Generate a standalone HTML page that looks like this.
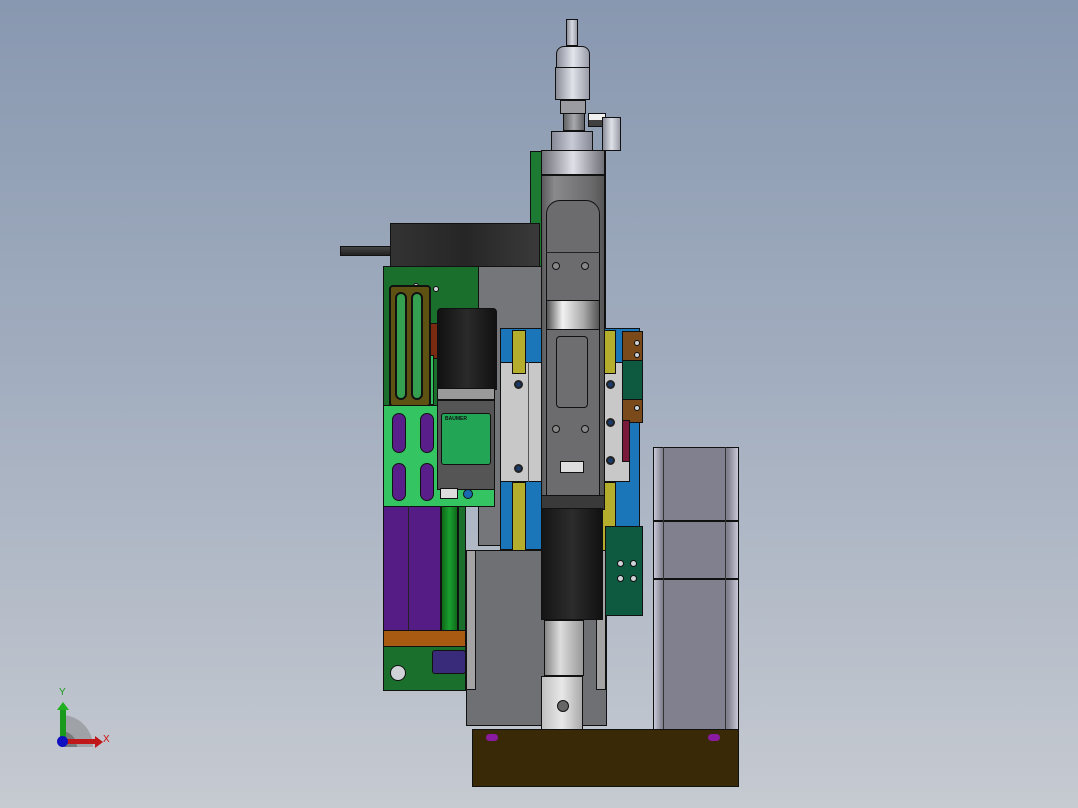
<!DOCTYPE html>
<html><head><style>
*{margin:0;padding:0;box-sizing:border-box}
body{width:1078px;height:808px;overflow:hidden;background:linear-gradient(180deg,#8898b0 0%,#a4afc0 50%,#c6cad1 100%);position:relative;font-family:"Liberation Sans",sans-serif}
div{position:absolute}
.b{border:1px solid #111}
.h{border-radius:50%;background:#cfd3d8;border:1px solid #111}
.s{border-radius:50%;background:#1a3a6a;border:2px solid #222;width:9px;height:9px}
</style></head><body>
<!-- top spindle -->
<div class="b" style="left:566px;top:19px;width:12px;height:27px;background:linear-gradient(90deg,#8a8c98,#d8dae2,#9a9ca8)"></div>
<div class="b" style="left:556px;top:46px;width:34px;height:22px;background:linear-gradient(90deg,#8a8c98,#e4e6ee,#9a9ca8);border-radius:8px 8px 0 0"></div>
<div class="b" style="left:555px;top:67px;width:35px;height:33px;background:linear-gradient(90deg,#8a8c98,#e0e2ea,#9a9ca8)"></div>
<div class="b" style="left:560px;top:100px;width:26px;height:14px;background:#9a9ca2"></div>
<div class="b" style="left:563px;top:113px;width:22px;height:18px;background:linear-gradient(90deg,#606264,#a8aaae,#606264)"></div>
<div class="b" style="left:551px;top:131px;width:42px;height:22px;background:linear-gradient(90deg,#888a98,#c8cad6,#888a98)"></div>
<div class="b" style="left:588px;top:113px;width:18px;height:14px;background:linear-gradient(180deg,#f0f0f0 50%,#404040 50%)"></div>
<div class="b" style="left:602px;top:117px;width:19px;height:34px;background:linear-gradient(90deg,#8a8c98,#e0e2ea,#9a9ca8)"></div>
<!-- green back plate -->
<div class="b" style="left:530px;top:151px;width:76px;height:300px;background:#1c7a32"></div>
<!-- cylinder top black -->
<div class="b" style="left:340px;top:246px;width:52px;height:10px;background:linear-gradient(180deg,#444,#222)"></div>
<div class="b" style="left:390px;top:223px;width:150px;height:46px;background:linear-gradient(90deg,#333,#262626,#3a3a3a)"></div>
<!-- grey block behind -->
<div class="b" style="left:478px;top:266px;width:64px;height:280px;background:#75767a"></div>
<!-- left green plate -->
<div class="b" style="left:383px;top:266px;width:96px;height:140px;background:#1b6f2c"></div>
<div class="h" style="left:413px;top:283px;width:6px;height:6px"></div>
<div class="h" style="left:433px;top:286px;width:6px;height:6px"></div>
<div class="b" style="left:389px;top:323px;width:50px;height:36px;background:#7a2a10"></div>
<div class="b" style="left:389px;top:355px;width:45px;height:50px;background:#34c060"></div>
<div style="left:389px;top:285px;width:42px;height:122px;border:2px solid #111;background:#5e5212;border-radius:4px"></div>
<div style="left:395px;top:292px;width:12px;height:108px;border:2px solid #111;background:#34a050;border-radius:6px"></div>
<div style="left:411px;top:292px;width:12px;height:108px;border:2px solid #111;background:#34a050;border-radius:6px"></div>
<!-- blue plate -->
<div class="b" style="left:500px;top:328px;width:140px;height:222px;background:#1a76b8"></div>
<div class="b" style="left:500px;top:362px;width:130px;height:120px;background:#c8c8c8"></div>
<div style="left:528px;top:362px;width:1px;height:120px;background:#555"></div>
<div class="s" style="left:514px;top:380px"></div><div class="s" style="left:514px;top:464px"></div>
<div class="s" style="left:606px;top:380px"></div><div class="s" style="left:606px;top:418px"></div><div class="s" style="left:606px;top:456px"></div>
<div class="b" style="left:512px;top:330px;width:14px;height:44px;background:#b5ad2c"></div>
<div class="b" style="left:512px;top:482px;width:14px;height:70px;background:#b5ad2c"></div>
<div class="b" style="left:602px;top:330px;width:14px;height:44px;background:#b5ad2c"></div>
<div class="b" style="left:602px;top:482px;width:14px;height:70px;background:#b5ad2c"></div>
<!-- right brackets -->
<div class="b" style="left:622px;top:331px;width:21px;height:92px;background:#7a4a1a"></div>
<div class="b" style="left:622px;top:360px;width:21px;height:40px;background:#0e5a40"></div>
<div class="h" style="left:634px;top:340px;width:6px;height:6px"></div>
<div class="h" style="left:634px;top:352px;width:6px;height:6px"></div>
<div class="h" style="left:634px;top:405px;width:6px;height:6px"></div>
<div class="b" style="left:622px;top:420px;width:8px;height:42px;background:#7a1a3a"></div>
<!-- black motor -->
<div class="b" style="left:437px;top:308px;width:60px;height:82px;background:linear-gradient(90deg,#111,#2a2a2a,#111);border-radius:4px 4px 0 0"></div>
<div class="b" style="left:437px;top:388px;width:58px;height:12px;background:#9a9a9a"></div>
<!-- light green plate -->
<div class="b" style="left:383px;top:405px;width:112px;height:102px;background:#34c462"></div>
<div class="b" style="left:437px;top:400px;width:58px;height:90px;background:#555"></div>
<div class="b" style="left:441px;top:413px;width:50px;height:52px;background:#22a656;border-radius:3px"></div>
<div style="left:445px;top:416px;font-size:5px;font-weight:bold;color:#111">BAUMER</div>
<div class="b" style="left:392px;top:413px;width:14px;height:40px;background:#5a1e8a;border-radius:7px"></div>
<div class="b" style="left:420px;top:413px;width:14px;height:40px;background:#5a1e8a;border-radius:7px"></div>
<div class="b" style="left:392px;top:463px;width:14px;height:38px;background:#5a1e8a;border-radius:7px"></div>
<div class="b" style="left:420px;top:463px;width:14px;height:38px;background:#5a1e8a;border-radius:7px"></div>
<div class="b" style="left:440px;top:488px;width:18px;height:11px;background:#ddd"></div>
<div class="h" style="left:463px;top:489px;width:10px;height:10px;background:#1a6ab0"></div>
<!-- purple columns -->
<div class="b" style="left:383px;top:506px;width:58px;height:126px;background:#561c86"></div>
<div style="left:408px;top:506px;width:1px;height:126px;background:#222"></div>
<div class="b" style="left:441px;top:506px;width:17px;height:126px;background:linear-gradient(90deg,#0e6a18,#1aa030,#0e6a18)"></div>
<div class="b" style="left:458px;top:506px;width:8px;height:126px;background:#1b6f2c"></div>
<div class="b" style="left:383px;top:630px;width:83px;height:18px;background:#a85a12"></div>
<div class="b" style="left:383px;top:646px;width:83px;height:45px;background:#1b6f2c"></div>
<div class="h" style="left:390px;top:665px;width:16px;height:16px"></div>
<div class="b" style="left:432px;top:650px;width:34px;height:24px;background:#3a2a7a;border-radius:3px"></div>
<!-- center grey housing -->
<div class="b" style="left:466px;top:550px;width:141px;height:176px;background:#6f7073"></div>
<div class="b" style="left:466px;top:550px;width:10px;height:140px;background:#a4a4a4"></div>
<div class="b" style="left:596px;top:550px;width:10px;height:140px;background:#a4a4a4"></div>
<!-- right dark green block -->
<div class="b" style="left:605px;top:526px;width:38px;height:90px;background:#0e5a40"></div>
<div class="h" style="left:617px;top:560px;width:7px;height:7px"></div>
<div class="h" style="left:630px;top:560px;width:7px;height:7px"></div>
<div class="h" style="left:617px;top:575px;width:7px;height:7px"></div>
<div class="h" style="left:630px;top:575px;width:7px;height:7px"></div>
<!-- main tool body -->
<div class="b" style="left:541px;top:150px;width:64px;height:25px;background:linear-gradient(90deg,#707078,#e0e0e8,#707078)"></div>
<div class="b" style="left:541px;top:175px;width:64px;height:335px;background:linear-gradient(90deg,#5a5a5c,#8a8a8c 20%,#6a6a6c 80%,#555)"></div>
<div class="b" style="left:546px;top:200px;width:54px;height:300px;background:#6c6c6e;border-radius:14px 14px 0 0"></div>
<div style="left:546px;top:252px;width:54px;height:1px;background:#222"></div>
<div class="b" style="left:546px;top:300px;width:54px;height:30px;background:linear-gradient(90deg,#555,#f2f2f2 30%,#aaa 70%,#555)"></div>
<div class="b" style="left:556px;top:336px;width:32px;height:72px;background:#6e6e70;border-radius:4px"></div>
<div class="h" style="left:552px;top:262px;width:8px;height:8px;background:#888"></div>
<div class="h" style="left:581px;top:262px;width:8px;height:8px;background:#888"></div>
<div class="h" style="left:552px;top:425px;width:8px;height:8px;background:#888"></div>
<div class="h" style="left:581px;top:425px;width:8px;height:8px;background:#888"></div>
<div class="b" style="left:560px;top:461px;width:24px;height:12px;background:#ddd"></div>
<div class="b" style="left:541px;top:495px;width:64px;height:15px;background:#3a3a3a"></div>
<div class="b" style="left:541px;top:508px;width:62px;height:112px;background:linear-gradient(90deg,#151515,#2c2c2c 50%,#111)"></div>
<div class="b" style="left:544px;top:620px;width:40px;height:56px;background:linear-gradient(90deg,#888,#ddd 40%,#999)"></div>
<div class="b" style="left:541px;top:676px;width:42px;height:56px;background:linear-gradient(90deg,#c0c0c0,#e8e8e8,#aaa)"></div>
<div class="h" style="left:557px;top:700px;width:12px;height:12px;background:#666"></div>
<!-- stepper motor -->
<div class="b" style="left:653px;top:447px;width:86px;height:283px;background:linear-gradient(90deg,#c8c8d8,#80808e 10%,#80808e 88%,#c8c8d8)"></div>
<div style="left:653px;top:520px;width:86px;height:2px;background:#111"></div>
<div style="left:653px;top:578px;width:86px;height:2px;background:#111"></div>
<div style="left:663px;top:447px;width:1px;height:283px;background:#333"></div>
<div style="left:725px;top:447px;width:1px;height:283px;background:#333"></div>
<!-- base -->
<div class="b" style="left:472px;top:729px;width:267px;height:58px;background:#3a2906"></div>
<div style="left:486px;top:734px;width:12px;height:7px;background:#8a1aa0;border-radius:4px"></div>
<div style="left:708px;top:734px;width:12px;height:7px;background:#8a1aa0;border-radius:4px"></div>
<!-- axis -->
<div style="left:61px;top:715px;width:32px;height:32px;border-radius:0 32px 0 0;background:rgba(120,120,120,.45)"></div>
<div style="left:61px;top:731px;width:16px;height:16px;border-radius:0 16px 0 0;background:rgba(80,80,80,.5)"></div>
<div style="left:60px;top:708px;width:6px;height:33px;background:#1a9a1a"></div>
<div style="left:57px;top:702px;width:0;height:0;border-left:6px solid transparent;border-right:6px solid transparent;border-bottom:8px solid #20b020"></div>
<div style="left:64px;top:739px;width:32px;height:5px;background:#c01818"></div>
<div style="left:95px;top:736px;width:0;height:0;border-top:6px solid transparent;border-bottom:6px solid transparent;border-left:8px solid #c01818"></div>
<div style="left:57px;top:736px;width:11px;height:11px;border-radius:50%;background:#1010c0"></div>
<div style="left:59px;top:687px;font-size:10px;color:#1c9c1c">Y</div>
<div style="left:103px;top:734px;font-size:10px;color:#d01010">X</div>
</body></html>
